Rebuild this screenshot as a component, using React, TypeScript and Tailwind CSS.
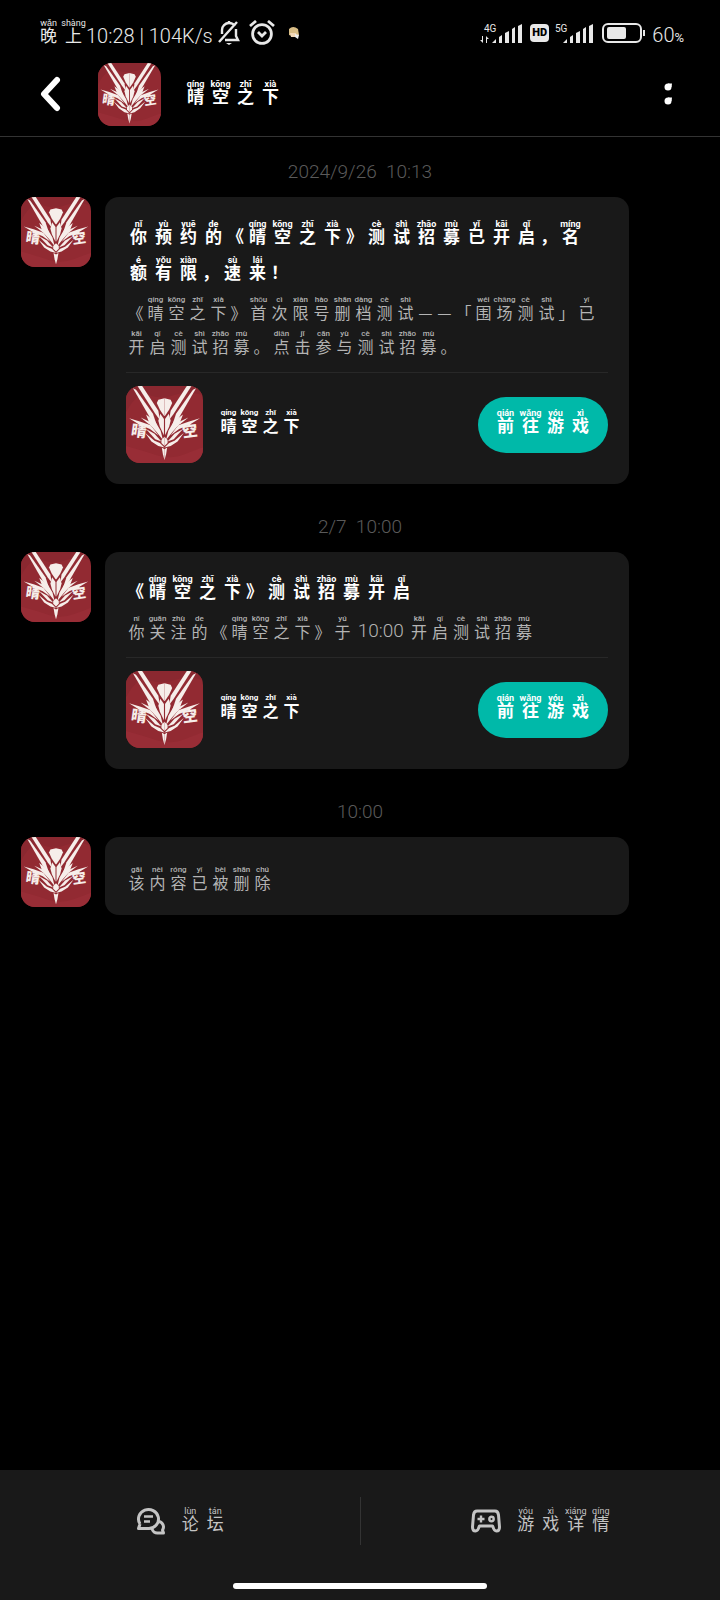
import React from "react";

type Syllable = [string, string?];
type Size = "title" | "body" | "name" | "button";

const GAME: Syllable[] = [["晴", "qíng"], ["空", "kōng"], ["之", "zhī"], ["下", "xià"]];
const QUOTED_GAME: Syllable[] = [["《"], ...GAME, ["》"]];
const TEST: Syllable[] = [["测", "cè"], ["试", "shì"]];
const RECRUIT: Syllable[] = [...TEST, ["招", "zhāo"], ["募", "mù"]];
const OPEN: Syllable[] = [["开", "kāi"], ["启", "qǐ"]];

const cellStyles: Record<Size, string> = {
  title: "w-[25px] text-[17px] font-bold",
  body: "w-[21px] text-[16px]",
  name: "w-[21px] text-[16px] font-bold",
  button: "w-[25px] text-[17px]",
};

const rtStyles: Record<Size, string> = {
  title: "text-[9px] font-bold",
  body: "text-[8px] font-medium",
  name: "text-[8px] font-bold",
  button: "text-[9px]",
};

function Pinyin({ text, size, className = "" }: { text: Syllable[]; size: Size; className?: string }) {
  return (
    <span className={`flex flex-wrap whitespace-pre ${size === "title" ? "gap-y-[10px]" : "gap-y-[8px]"} ${className}`}>
      {text.map(([char, sound], i) =>
        sound ? (
          <ruby key={i} className={`flex flex-col-reverse items-center pb-[2px] leading-[14px] ${cellStyles[size]}`}>
            <span>{char}</span>
            <rt className={`block font-['Roboto',sans-serif] leading-[10px] ${rtStyles[size]}`}>{sound}</rt>
          </ruby>
        ) : (
          <span
            key={i}
            className={`flex justify-center pb-[2px] pt-[10px] leading-[14px] ${
              char.length > 1
                ? "font-['Roboto',sans-serif] text-[19px] font-light"
                : size === "title"
                  ? "w-[19px] text-[17px] font-bold"
                  : "w-[19px] text-[16px]"
            }`}
          >
            {char}
          </span>
        ),
      )}
    </span>
  );
}

function EmblemHalf() {
  return (
    <g fill="#f6eeea">
      <path d="M9 3 L13 5 L35 36 L40 51 L31 41 Z" />
      <path d="M15 0 L21 0 L42 32 L44 44 L38 36 Z" />
      <path d="M50 16 L42 18 L40 22 L44 31 L49.500 39 L50 39 Z" />
      <path d="M44.500 36 L49.300 43 L49.300 64 L44 53 L42 45 Z" />
      <path d="M26 37 L38 46 L45 58 L48 70 L40 60 L31 50 Z" />
      <path d="M4 42 L18 46 L32 51 L42 64 L31 56 L17 50 Z" />
      <path d="M19 41 L30 46 L36 53 L29 49 Z" />
      <path d="M26 56 L37 62 L46 72 L38 69 Z" />
      <path d="M25 61 L37 71 L44 74 L50 80 L42 78 L33 72 Z" />
      <path d="M50 66 L46 70 L46 74 L50 78 Z" />
      <path d="M46.500 80 L50 82 L50 96 L48 89 Z" />
    </g>
  );
}

function Emblem({ className }: { className: string }) {
  return (
    <svg viewBox="0 0 100 100" className={`shrink-0 ${className}`} role="img" aria-label="晴空之下">
      <rect width="100" height="100" fill="#922a32" />
      <path d="M0 0H100V12Q80 5 62 12T22 8Q8 18 0 34Z" fill="#8a2830" />
      <path d="M0 78Q22 84 40 90T78 88T100 80V100H0Z" fill="#982d36" />
      <EmblemHalf />
      <g transform="translate(100 0) scale(-1 1)">
        <EmblemHalf />
      </g>
      <g fill="#f6eeea" fontSize="20" fontWeight="900" fontFamily="Noto Sans CJK SC, sans-serif">
        <text x="6" y="64" transform="rotate(8 6 64)">晴</text>
        <text x="74" y="67" transform="rotate(-8 74 67)">空</text>
      </g>
    </svg>
  );
}

function Signal({ label, data = false }: { label: string; data?: boolean }) {
  return (
    <svg
      width={data ? 42 : 38}
      height="22"
      viewBox={data ? "0 0 42 22" : "4 0 38 22"}
      fill="#e8e8e8"
      aria-label={label}
    >
      <text x="4" y="9" fontSize="10" fontFamily="Roboto, sans-serif">
        {label}
      </text>
      {data && <path d="M3 13v7l-3-3h2v-4zM6 20v-7l3 3H7v4z" />}
      <path d="M12 20l4-4v4zM19 14l3-2v8h-3zM25 10l4-2v12h-4zM32 6l3-2v16h-3zM38 3l4-2v19h-4z" />
    </svg>
  );
}

function StatusBar() {
  return (
    <div className="flex h-[56px] items-start justify-between px-[36px] pt-[18px] text-[#e8e8e8]">
      <div className="flex items-start">
        <Pinyin text={[["晚", "wǎn"], ["上", "shàng"]]} size="button" />
        <span className="whitespace-pre pt-[6px] font-['Roboto',sans-serif] text-[20px] font-light leading-[24px]">
          10:28 | 104K/s
        </span>
        <svg className="ml-[4px] mt-[2px]" width="24" height="26" viewBox="0 0 24 26" fill="none" stroke="#e8e8e8" strokeWidth="2.4">
          <path d="M5 14V10a7 7 0 0 1 7-7q4 0 6 3M19 9v7l2 4H8M2 22L20 2M12 3V1" />
          <path d="M9 23h6l-3 2z" fill="#e8e8e8" stroke="none" />
        </svg>
        <svg className="ml-[8px] mt-[2px]" width="26" height="26" viewBox="0 0 26 26" fill="none" stroke="#e8e8e8" strokeWidth="2.8">
          <circle cx="13" cy="14" r="9.4" />
          <path d="M9 12l4 4 4-4M1 6l6-5M25 6l-6-5" />
        </svg>
        <svg className="ml-[12px] mt-[8px]" width="14" height="14" viewBox="0 0 14 14">
          <path d="M2 3Q6-1 11 3L12 9 8 11 2 9Z" fill="#d9bd86" />
          <path d="M3 7h6v4H4z" fill="#f3d9b8" />
          <path d="M8 8l4 1-1 4-3-2z" fill="#eeeeee" />
        </svg>
      </div>
      <div className="flex items-start pt-[5px]">
        <Signal label="4G" data />
        <span className="ml-[8px] mt-px flex h-[18px] w-[19px] items-center justify-center rounded-[4px] bg-[#e8e8e8] font-['Roboto',sans-serif] text-[11px] font-black text-black">
          HD
        </span>
        <span className="ml-[6px]">
          <Signal label="5G" />
        </span>
        <svg className="ml-[9px]" width="44" height="20" viewBox="0 0 44 20" aria-label="60%">
          <rect x="1" y="1" width="38" height="18" rx="5" fill="none" stroke="#e8e8e8" strokeWidth="2" />
          <rect x="5" y="4" width="19" height="12" rx="2" fill="#e8e8e8" />
          <path d="M42 7v6" stroke="#e8e8e8" strokeWidth="2" />
        </svg>
        <span className="ml-[6px] font-['Roboto',sans-serif] text-[20px] font-light leading-[24px]">
          60<span className="text-[13px] font-normal">%</span>
        </span>
      </div>
    </div>
  );
}

function Header() {
  return (
    <header className="flex h-[81px] items-center border-b border-[#333333] pl-[36px] pr-[40px] text-white">
      <button aria-label="返回" className="flex w-[28px] justify-center pb-[4px]">
        <svg width="24" height="36" viewBox="0 0 24 36" fill="none" stroke="white" strokeWidth="6" strokeLinecap="round" strokeLinejoin="round">
          <path d="M19 4L6 18l13 14" />
        </svg>
      </button>
      <Emblem className="mb-[4px] ml-[34px] size-[63px] rounded-[14px]" />
      <h1 className="mb-[9px] ml-[22px]">
        <Pinyin text={GAME} size="title" />
      </h1>
      <button aria-label="更多" className="ml-auto flex w-[24px] justify-center pb-[4px]">
        <svg width="8" height="22" viewBox="0 0 8 22" fill="white">
          <circle cx="4" cy="4" r="3.5" />
          <path d="M4 0.500h4L7.500 4H4z" />
          <circle cx="4" cy="18" r="3.5" />
          <path d="M4 14.500h4L7.500 18H4z" />
        </svg>
      </button>
    </header>
  );
}

function Time({ children, className }: { children: string; className: string }) {
  return (
    <time className={`mb-[13px] block whitespace-pre text-center font-['Roboto',sans-serif] text-[19px] font-light leading-[24px] text-[#5a5a5a] ${className}`}>
      {children}
    </time>
  );
}

function Message({ children }: { children: React.ReactNode }) {
  return (
    <article className="flex items-start gap-[14px] pl-[21px] pr-[91px]">
      <Emblem className="size-[70px] rounded-[14px]" />
      <div className="min-w-0 flex-1 rounded-[14px] bg-[#191919] px-[21px]">{children}</div>
    </article>
  );
}

function GameMessage({ title, body }: { title: Syllable[]; body: Syllable[] }) {
  return (
    <Message>
      <h2 className="pr-[2px] pt-[22px] text-white">
        <Pinyin text={title} size="title" />
      </h2>
      <p className="mt-[14px] pr-[2px] text-[#b4b4b4]">
        <Pinyin text={body} size="body" />
      </p>
      <div className="mt-[17px] flex items-center border-t border-[#282828] pb-[21px] pt-[13px]">
        <Emblem className="size-[77px] rounded-[14px]" />
        <Pinyin text={GAME} size="name" className="mb-[8px] ml-[15px] text-white" />
        <button className="ml-auto flex h-[56px] w-[130px] items-center justify-center rounded-full bg-[#00b9a9] pb-[8px] text-white">
          <Pinyin text={[["前", "qián"], ["往", "wǎng"], ["游", "yóu"], ["戏", "xì"]]} size="title" />
        </button>
      </div>
    </Message>
  );
}

export default function App() {
  return (
    <div className="flex min-h-screen flex-col bg-black font-['Noto_Sans_CJK_SC',sans-serif]">
      <StatusBar />
      <Header />
      <main className="flex-1 pb-[31px]">
        <Time className="mt-[23px]">2024/9/26  10:13</Time>
        <GameMessage
          title={[
            ["你", "nǐ"], ["预", "yù"], ["约", "yuē"], ["的", "de"], ...QUOTED_GAME, ...RECRUIT,
            ["已", "yǐ"], ...OPEN, ["，"], ["名", "míng"], ["额", "é"], ["有", "yǒu"], ["限", "xiàn"],
            ["，"], ["速", "sù"], ["来", "lái"], ["！"],
          ]}
          body={[
            ...QUOTED_GAME, ["首", "shǒu"], ["次", "cì"], ["限", "xiàn"], ["号", "hào"], ["删", "shān"],
            ["档", "dàng"], ...TEST, ["—"], ["—"], ["「"], ["围", "wéi"], ["场", "chǎng"], ...TEST, ["」"],
            ["已", "yǐ"], ...OPEN, ...RECRUIT, ["。"], ["点", "diǎn"], ["击", "jī"], ["参", "cān"],
            ["与", "yù"], ...RECRUIT, ["。"],
          ]}
        />
        <Time className="mt-[31px]">2/7  10:00</Time>
        <GameMessage
          title={[...QUOTED_GAME, ...RECRUIT, ...OPEN]}
          body={[
            ["你", "nǐ"], ["关", "guān"], ["注", "zhù"], ["的", "de"], ...QUOTED_GAME, ["于", "yú"],
            [" 10:00 "], ...OPEN, ...RECRUIT,
          ]}
        />
        <Time className="mt-[31px]">10:00</Time>
        <Message>
          <p className="pb-[24px] pt-[28px] text-[#b4b4b4]">
            <Pinyin
              text={[["该", "gāi"], ["内", "nèi"], ["容", "róng"], ["已", "yǐ"], ["被", "bèi"], ["删", "shān"], ["除", "chú"]]}
              size="body"
            />
          </p>
        </Message>
      </main>
      <footer className="bg-[#191919] text-[#c4c4c4]">
        <nav className="flex h-[102px] items-center">
          <a href="#forum" className="flex flex-1 items-center justify-center gap-[12px] pl-[4px]">
            <svg width="30" height="28" viewBox="0 0 30 28" fill="none" stroke="currentColor" strokeWidth="3" strokeLinejoin="round">
              <path d="M4 17A10 9.500 0 1 1 13 21.500H2.500L4 17" />
              <path d="M8 9.500h9M8 14.500h6" strokeWidth="2.400" />
              <path d="M16 21.500a5.500 5.500 0 0 0 6 4.500h5.500l-1-3a5.500 5.500 0 0 0-3.500-8.500" />
            </svg>
            <Pinyin text={[["论", "lùn"], ["坛", "tán"]]} size="button" className="mb-[4px]" />
          </a>
          <div className="h-[48px] w-px bg-[#333333]" />
          <a href="#details" className="flex flex-1 items-center justify-center gap-[12px] pl-[4px]">
            <svg width="30" height="24" viewBox="0 0 30 24" fill="none" stroke="currentColor" strokeWidth="3" strokeLinejoin="round">
              <path d="M6 2H24Q27 2 27.500 6L28.500 18Q28.500 22 25.500 22Q23 22 22 18L21.500 17H8.500L8 18Q7 22 4.500 22Q1.500 22 1.500 18L2.500 6Q3 2 6 2Z" />
              <path d="M10 6.500v7M6.500 10h7" strokeWidth="2.400" />
              <circle cx="20.500" cy="10" r="2.200" strokeWidth="2.400" />
            </svg>
            <Pinyin text={[["游", "yóu"], ["戏", "xì"], ["详", "xiáng"], ["情", "qíng"]]} size="button" className="mb-[4px]" />
          </a>
        </nav>
        <div className="flex h-[28px] justify-center pt-[11px]">
          <div className="h-[6px] w-[254px] rounded-full bg-white" />
        </div>
      </footer>
    </div>
  );
}
